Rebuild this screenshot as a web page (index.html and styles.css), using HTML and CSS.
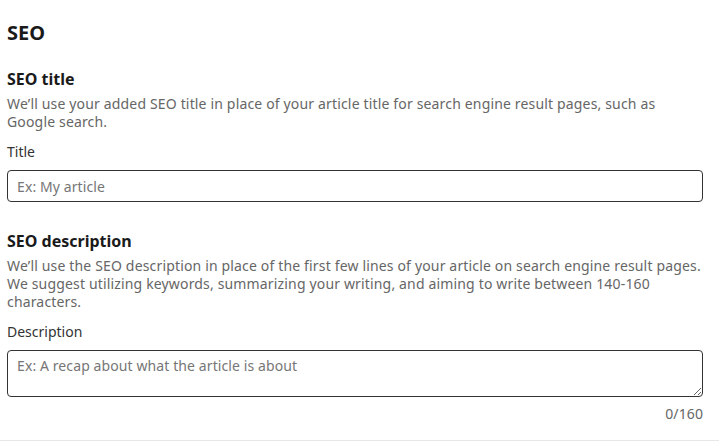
FILE: index.html
```html
<!DOCTYPE html>
<html lang="en">
<head>
  <meta charset="UTF-8" />
  <meta name="viewport" content="width=device-width, initial-scale=1.0"/>
  <title>SEO Settings</title>
  <link rel="stylesheet" href="styles.css">
</head>
<body>

<div class="seo-panel">
  <h2>SEO</h2>

  <div class="field">
    <h3>SEO title</h3>
    <p class="hint">We’ll use your added SEO title in place of your article title for search engine result pages, such as Google search.</p>
    <label for="seoTitle">Title</label>
    <input type="text" id="seoTitle" placeholder="Ex: My article" />
  </div>

  <div class="field">
    <h3>SEO description</h3>
    <p class="hint">We’ll use the SEO description in place of the first few lines of your article on search engine result pages. We suggest utilizing keywords, summarizing your writing, and aiming to write between 140-160 characters.</p>
    <label for="seoDesc">Description</label>
    <textarea id="seoDesc" maxlength="160" placeholder="Ex: A recap about what the article is about"></textarea>
    <div class="counter" id="counter">0/160</div>
  </div>
</div>

<script>
  const desc = document.getElementById("seoDesc");
  const counter = document.getElementById("counter");

  desc.addEventListener("input", () => {
    counter.textContent = desc.value.length + "/160";
  });
</script>

</body>
</html>
```

FILE: styles.css
```css
* {
  box-sizing: border-box;
}

body {
  margin: 0;
  font-family: 'Noto Sans', 'Open Sans', sans-serif;
  background: #ffffff;
  color: #1a1a1a;
}

.seo-panel {
  padding: 0 16px 16px 7px;
  border-bottom: 1px solid #e6e6e6;
}

.seo-panel h2 {
  margin: 20px 0 0;
  font-size: 20px;
  line-height: 26px;
  font-weight: 700;
}

.field h3 {
  margin: 22px 0 0;
  font-size: 16px;
  line-height: 22px;
  font-weight: 700;
}

.field + .field h3 {
  margin-top: 28px;
}

.hint {
  margin: 5px 0 0;
  font-size: 14px;
  line-height: 18px;
  letter-spacing: 0.16px;
  color: #666666;
}

.field label {
  display: block;
  margin: 11px 0 8px;
  font-size: 14px;
  line-height: 20px;
  color: #333333;
}

.field input,
.field textarea {
  display: block;
  width: 100%;
  padding: 6px 9px;
  border: 1px solid #333333;
  border-radius: 4px;
  font-family: inherit;
  font-size: 14px;
  letter-spacing: 0.1px;
  color: #1a1a1a;
  background: #fff;
}

.field input {
  height: 32px;
}

.field textarea {
  height: 47px;
  resize: vertical;
  line-height: 18px;
}

.field input::placeholder,
.field textarea::placeholder {
  color: #767676;
}

.counter {
  margin-top: 7px;
  text-align: right;
  font-size: 14px;
  line-height: 20px;
  letter-spacing: 0.1px;
  color: #666666;
}
```
